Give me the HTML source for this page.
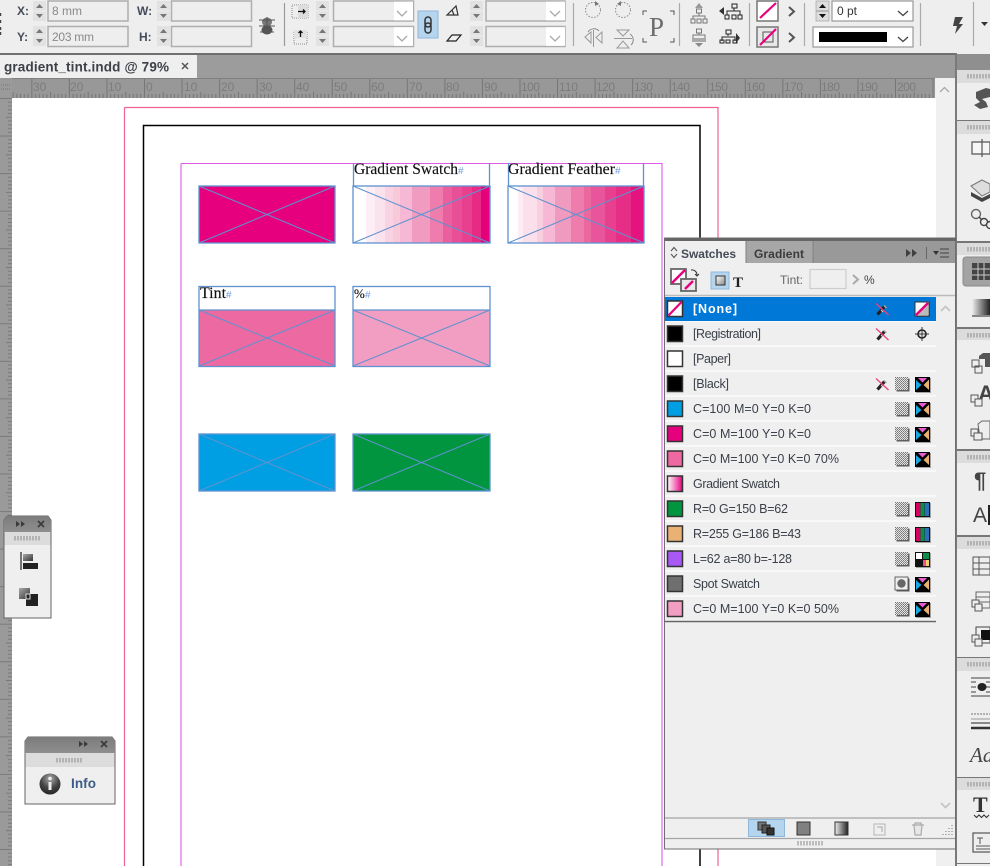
<!DOCTYPE html>
<html><head><meta charset="utf-8"><title>gradient_tint.indd</title>
<style>
html,body{margin:0;padding:0;background:#eee;width:990px;height:866px;overflow:hidden}
svg{display:block;position:absolute;left:0;top:0;filter:blur(.35px)}
text{font-family:"Liberation Sans",sans-serif}
.s{font-family:"Liberation Serif",serif;font-size:16px;fill:#111;stroke:#111;stroke-width:.15}
.h{font-family:"Liberation Sans",sans-serif;font-size:10px;fill:#6f9bd8}
.r{font-size:12px;fill:#7c7c7c}
.sw{font-size:12.5px;fill:#3a3f48}
.fr{fill:none;stroke:#5f92cf;stroke-width:1.3}
.x{stroke:#5f92cf;stroke-width:1;fill:none}
.lb{font-size:12px;font-weight:bold;fill:#444c5c}
.f{fill:#eee;stroke:#aeaeae;stroke-width:1.5}
.g{fill:none;stroke:#8d8d8d;stroke-width:1;stroke-dasharray:1 1}
.ch{fill:none;stroke:#a9a9a9;stroke-width:1.3}
</style></head><body>
<svg width="990" height="866" viewBox="0 0 990 866" xmlns="http://www.w3.org/2000/svg">
<defs>
<pattern id="rh" x="-6.2" y="78" width="37.55" height="20" patternUnits="userSpaceOnUse">
<rect width="37.55" height="20" fill="#989898"/>
<path d="M.5 0V20M4.25 16V20M8 16V20M11.8 16V20M15.5 16V20M19.3 14V20M23 16V20M26.8 16V20M30.5 16V20M34.3 16V20" stroke="#767676" stroke-width="1" fill="none"/>
</pattern>
<pattern id="rv" x="0" y="98" width="12" height="37.55" patternUnits="userSpaceOnUse">
<rect width="12" height="37.55" fill="#9a9a9a"/>
<path d="M0 .5H12M8 4.25H12M8 8H12M8 11.8H12M8 15.5H12M6 19.3H12M8 23H12M8 26.8H12M8 30.5H12M8 34.3H12" stroke="#7a7a7a" stroke-width="1" fill="none"/>
</pattern>
<pattern id="dith" width="2" height="2" patternUnits="userSpaceOnUse"><rect width="2" height="2" fill="#e4e4e4"/><rect width="1" height="1" fill="#777"/><rect x="1" y="1" width="1" height="1" fill="#888"/></pattern>
<linearGradient id="hd" x1="0" y1="0" x2="0" y2="1"><stop offset="0" stop-color="#7c7c7c"/><stop offset="1" stop-color="#8e8e8e"/></linearGradient>
<linearGradient id="gs" x1="0" y1="0" x2="1" y2="0"><stop offset="0" stop-color="#fff"/><stop offset="1" stop-color="#e6007e"/></linearGradient>
<linearGradient id="gk" x1="0" y1="0" x2="1" y2="0"><stop offset="0" stop-color="#eee"/><stop offset="1" stop-color="#222"/></linearGradient>
<linearGradient id="gv" x1="0" y1="0" x2="1" y2="1"><stop offset="0" stop-color="#aaa"/><stop offset="1" stop-color="#333"/></linearGradient>
<linearGradient id="gb" x1="0" y1="0" x2="1" y2="1"><stop offset="0" stop-color="#fff"/><stop offset="1" stop-color="#888"/></linearGradient>
<radialGradient id="sph" cx=".5" cy=".25" r=".8"><stop offset="0" stop-color="#aaa"/><stop offset=".55" stop-color="#444"/><stop offset="1" stop-color="#222"/></radialGradient>
<g id="spin"><rect width="13" height="9.5" fill="#e2e2e2"/><rect y="10.5" width="13" height="9.5" fill="#e2e2e2"/><path d="M3 7l3.5-4 3.5 4zM3 13l3.5 4 3.5-4z" fill="#777"/></g>
<g id="spb"><rect width="13" height="9.5" fill="#ddd" stroke="#999" stroke-width=".6"/><rect y="10.5" width="13" height="9.5" fill="#ddd" stroke="#999" stroke-width=".6"/><path d="M3 7l3.5-4 3.5 4zM3 13l3.5 4 3.5-4z" fill="#111"/></g>
<g id="proc"><rect x="1.500" y="1.500" width="13" height="13" fill="#222" opacity=".7"/><rect width="13" height="13" fill="url(#dith)"/></g>
<g id="spot"><rect x="1.500" y="1.500" width="13" height="13" fill="#222" opacity=".7"/><rect width="13" height="13" fill="#eee" stroke="#444" stroke-width=".8"/><circle cx="6.500" cy="6.500" r="4.200" fill="#666"/></g>
<g id="cmyk"><rect x="1" y="1" width="15" height="15" fill="#333" opacity=".4"/><rect width="15" height="15" fill="#000"/><path d="M3 1H12L7.500 5.500z" fill="#e75cd0"/><path d="M1 3V13L6.500 8z" fill="#19a7df"/><path d="M14 2.500V13L8.500 8z" fill="#eab070"/></g>
<g id="rgb"><rect x="1" y="1" width="15" height="15" fill="#333" opacity=".4"/><rect width="15" height="15" fill="#111"/><rect x="1" y="1" width="4.300" height="13" fill="#d5005f"/><rect x="5.500" y="1" width="4" height="13" fill="#0d8c4a"/><rect x="9.800" y="1" width="4.200" height="13" fill="#2a6fb8"/></g>
<g id="lab"><rect x="1" y="1" width="15" height="15" fill="#333" opacity=".4"/><rect width="15" height="15" fill="#111"/><rect x="1" y="1" width="6" height="6" fill="#fff"/><rect x="8" y="1" width="6" height="6" fill="#0d8c4a"/><rect x="8" y="8" width="3" height="6" fill="#ef4f8e"/><rect x="11" y="8" width="3" height="6" fill="#f3d16b"/></g>
<g id="pen"><path d="M2.500 12.500L9.500 4.500" stroke="#222" stroke-width="3.200" fill="none"/><path d="M9 3.500l2.500 2.500" stroke="#aaa" stroke-width="1.500"/><path d="M6 8l2 2" stroke="#ddd" stroke-width="1"/><path d="M1 1.500L13.500 13" stroke="#ef3f7c" stroke-width="1.300"/></g>
<g id="none"><rect x="1" y="1" width="14" height="14" fill="#333" opacity=".5"/><rect width="14" height="14" fill="#fff" stroke="#333" stroke-width="1"/><path d="M1 13L13 1L13 13z" fill="#bbb"/><path d="M1 13L13 1" stroke="#e6007e" stroke-width="2.400"/></g>
<g id="grip"><path d="M0 0V4.500M3 0V4.500M6 0V4.500M9 0V4.500M12 0V4.500M15 0V4.500M18 0V4.500M21 0V4.500M24 0V4.500" stroke="#8a8a8a" stroke-width="1"/></g>
</defs>

<!-- app background -->
<rect width="990" height="866" fill="#eee"/>

<!-- document tab strip -->
<rect x="0" y="53" width="957" height="25" fill="#9c9c9c"/>
<rect x="0" y="53" width="957" height="2" fill="#6f6f6f"/>
<rect x="0" y="55" width="197" height="24" fill="#efefef"/>
<text x="4" y="71.500" font-size="13.500" font-weight="bold" fill="#3d4047" textLength="165">gradient_tint.indd @ 79%</text>
<path d="M182 63l6 6M188 63l-6 6" stroke="#555" stroke-width="1.500"/>

<!-- rulers -->
<rect x="0" y="78" width="935" height="20" fill="url(#rh)"/>
<rect x="0" y="78" width="935" height="1" fill="#808080"/>
<rect x="0" y="78" width="12" height="20" fill="#9a9a9a"/>
<path d="M1 85H11M1 89H11" stroke="#777" stroke-dasharray="1 1"/>
<text class="r" x="33" y="91">30</text><text class="r" x="70" y="91">20</text><text class="r" x="108" y="91">10</text><text class="r" x="146" y="91">0</text>
<text class="r" x="184" y="91">10</text><text class="r" x="221" y="91">20</text><text class="r" x="259" y="91">30</text><text class="r" x="296" y="91">40</text>
<text class="r" x="334" y="91">50</text><text class="r" x="371" y="91">60</text><text class="r" x="409" y="91">70</text><text class="r" x="446" y="91">80</text>
<text class="r" x="484" y="91">90</text><text class="r" x="521" y="91" textLength="19">100</text><text class="r" x="559" y="91" textLength="19">110</text><text class="r" x="596" y="91" textLength="19">120</text>
<text class="r" x="634" y="91" textLength="19">130</text><text class="r" x="671" y="91" textLength="19">140</text><text class="r" x="709" y="91" textLength="19">150</text><text class="r" x="746" y="91" textLength="19">160</text>
<text class="r" x="784" y="91" textLength="19">170</text><text class="r" x="821" y="91" textLength="19">180</text><text class="r" x="859" y="91" textLength="19">190</text><text class="r" x="897" y="91" textLength="19">200</text>
<rect x="0" y="98" width="12" height="768" fill="url(#rv)"/>

<!-- pasteboard + page -->
<rect x="12" y="98" width="924" height="768" fill="#fff"/>
<rect x="936" y="79" width="20" height="787" fill="#f0f0f0"/>
<path d="M940 92l4.500-4.500 4.500 4.500" class="ch" fill="none"/>
<path d="M124.500 107.500H718V866M124.500 107.500V866" fill="none" stroke="#f0638f" stroke-width="1.200"/>
<path d="M143.500 866V125.500H700V866" fill="none" stroke="#000" stroke-width="1.500"/>
<path d="M181 163.500H662V866M181 163.500V866" fill="none" stroke="#e05ae8" stroke-width="1.100"/>

<!-- frames row 1 -->
<rect x="199" y="186" width="136" height="57" fill="#e6007e"/>
<rect x="353" y="186" width="137" height="57" fill="#fff"/>
<rect x="366" y="186" width="9" height="57" fill="#fdeef5"/>
<rect x="375" y="186" width="10" height="57" fill="#fbe3ee"/>
<rect x="385" y="186" width="8" height="57" fill="#f9d3e4"/>
<rect x="393" y="186" width="7" height="57" fill="#f8c9d8"/>
<rect x="400" y="186" width="12" height="57" fill="#f6b8d4"/>
<rect x="412" y="186" width="18" height="57" fill="#f09cc0"/>
<rect x="430" y="186" width="13" height="57" fill="#ee7dae"/>
<rect x="443" y="186" width="9" height="57" fill="#ea5f9e"/>
<rect x="452" y="186" width="10" height="57" fill="#e94f96"/>
<rect x="462" y="186" width="10" height="57" fill="#e83f8e"/>
<rect x="472" y="186" width="9" height="57" fill="#e72b85"/>
<rect x="481" y="186" width="9" height="57" fill="#e5007e"/>
<rect x="508" y="186" width="136" height="57" fill="#fff"/>
<rect x="518" y="186" width="5" height="57" fill="#fdeef5"/>
<rect x="523" y="186" width="14" height="57" fill="#fbdfeb"/>
<rect x="537" y="186" width="6" height="57" fill="#f9cfdf"/>
<rect x="543" y="186" width="12" height="57" fill="#f6b8d4"/>
<rect x="555" y="186" width="16" height="57" fill="#f19ac0"/>
<rect x="571" y="186" width="13" height="57" fill="#ee7dae"/>
<rect x="584" y="186" width="7" height="57" fill="#eb689f"/>
<rect x="591" y="186" width="14" height="57" fill="#e9559a"/>
<rect x="605" y="186" width="11" height="57" fill="#e8408e"/>
<rect x="616" y="186" width="15" height="57" fill="#e72e87"/>
<rect x="631" y="186" width="13" height="57" fill="#e5137f"/>
<rect class="fr" x="199" y="186" width="136" height="57"/><path class="x" d="M199 186L335 243M335 186L199 243"/>
<rect class="fr" x="353" y="186" width="137" height="57"/><path class="x" d="M353 186L490 243M490 186L353 243"/>
<rect class="fr" x="508" y="186" width="136" height="57"/><path class="x" d="M508 186L644 243M644 186L508 243"/>
<path class="fr" d="M353.500 163V186M489.500 163V186M508.500 163V186M643.500 163V186"/>
<text class="s" x="354" y="174" textLength="104" lengthAdjust="spacingAndGlyphs">Gradient Swatch</text><text class="h" x="458" y="174">#</text>
<text class="s" x="508" y="174" textLength="107" lengthAdjust="spacingAndGlyphs">Gradient Feather</text><text class="h" x="615" y="174">#</text>

<!-- frames row 2 -->
<rect x="199" y="310" width="136" height="56" fill="#ed69a2"/>
<rect x="353" y="310" width="137" height="56" fill="#f29dc2"/>
<rect class="fr" x="199" y="286.500" width="136" height="80"/><path class="fr" d="M199 310H335"/><path class="x" d="M199 310L335 366M335 310L199 366"/>
<rect class="fr" x="353" y="286.500" width="137" height="80"/><path class="fr" d="M353 310H490"/><path class="x" d="M353 310L490 366M490 310L353 366"/>
<text class="s" x="200" y="298" textLength="26" lengthAdjust="spacingAndGlyphs">Tint</text><text class="h" x="226" y="298">#</text>
<text class="s" x="354" y="298" style="font-size:13px" textLength="11">%</text><text class="h" x="365" y="298">#</text>

<!-- frames row 3 -->
<rect x="199" y="434" width="136" height="57" fill="#009fe3"/>
<rect x="353" y="434" width="137" height="57" fill="#00953e"/>
<rect class="fr" x="199" y="434" width="136" height="57"/><path class="x" d="M199 434L335 491M335 434L199 491"/>
<rect class="fr" x="353" y="434" width="137" height="57"/><path class="x" d="M353 434L490 491M490 434L353 491"/>

<!-- floating align palette -->
<path d="M4 618V520l3-4H48l3 4V618z" fill="#efefef" stroke="#666" stroke-width="1"/>
<path d="M4 532V520l3-4H48l3 4V532z" fill="url(#hd)"/>
<rect x="4.500" y="532" width="46" height="13" fill="#dcdcdc"/>
<use href="#grip" transform="translate(15 536)"/>
<path d="M16 521l4 3-4 3zM21 521l4 3-4 3z" fill="#3a3a3a"/>
<path d="M38 521l6 6M44 521l-6 6" stroke="#3a3a3a" stroke-width="1.600"/>
<path d="M21 552V570" stroke="#222" stroke-width="1.200"/>
<rect x="23" y="554" width="10" height="7" fill="url(#gv)"/>
<rect x="23" y="563" width="15" height="6" fill="#222"/>
<rect x="19" y="588" width="11" height="11" fill="url(#gv)"/>
<rect x="26" y="594" width="12" height="12" fill="#222"/>
<rect x="26" y="594" width="4" height="5" fill="none" stroke="#ddd"/>

<!-- floating info palette -->
<path d="M25 804V741l3-4H112l3 4V804z" fill="#efefef" stroke="#666" stroke-width="1"/>
<path d="M25 753V741l3-4H112l3 4V753z" fill="url(#hd)"/>
<rect x="25.500" y="753" width="89" height="14" fill="#dcdcdc"/>
<use href="#grip" transform="translate(57 758)"/>
<path d="M79 741l4 3-4 3zM84 741l4 3-4 3z" fill="#3a3a3a"/>
<path d="M101 741l6 6M107 741l-6 6" stroke="#3a3a3a" stroke-width="1.600"/>
<circle cx="50" cy="784" r="10.500" fill="url(#sph)"/>
<rect x="48.500" y="782" width="3" height="8" fill="#eee"/><circle cx="50" cy="778.500" r="1.800" fill="#eee"/>
<text x="71" y="788" font-size="13.500" font-weight="bold" fill="#3c5b86" textLength="25">Info</text>

<!-- toolbar -->
<rect x="0" y="0" width="990" height="53" fill="#eeeeee"/>
<path d="M.5 13v3M.5 20v3M.5 27v3M.5 32v3" stroke="#444" stroke-width="1.500"/>
<text class="lb" x="17" y="15">X:</text><text class="lb" x="17" y="41">Y:</text>
<text class="lb" x="137" y="15">W:</text><text class="lb" x="139" y="41">H:</text>
<use href="#spin" transform="translate(33 1)"/><use href="#spin" transform="translate(33 26)"/>
<use href="#spin" transform="translate(157 1)"/><use href="#spin" transform="translate(157 26)"/>
<rect class="f" x="48" y="1" width="80" height="20"/><rect class="f" x="48" y="26.500" width="80" height="20"/>
<text x="52" y="15" font-size="12" fill="#8a8a8a" textLength="30">8 mm</text>
<text x="52" y="41" font-size="12" fill="#8a8a8a" textLength="42">203 mm</text>
<rect class="f" x="171.500" y="1" width="80" height="20"/><rect class="f" x="171.500" y="26.500" width="80" height="20"/>
<ellipse cx="267" cy="22" rx="5" ry="4.500" fill="#777"/><ellipse cx="267" cy="30" rx="5.500" ry="4.500" fill="#555"/>
<path d="M259 20h16M259 26h16M260 32h14M267 17v17" stroke="#555" stroke-width="1" fill="none"/>
<path d="M284.500 3V46" stroke="#999" stroke-width="1.200"/>
<rect x="292" y="5" width="16" height="13" class="g"/><rect x="298" y="5" width="10" height="13" fill="#ddd"/><path d="M298 11.500h7m-2-2l2 2-2 2" stroke="#111" fill="none" stroke-width="1.300"/>
<rect x="294" y="31" width="13" height="13" class="g"/><rect x="294" y="30" width="13" height="8" fill="#e2e2e2"/><path d="M300.500 37v-6m-2 2l2-2 2 2" stroke="#111" fill="none" stroke-width="1.300"/>
<use href="#spin" transform="translate(316 1)"/><use href="#spin" transform="translate(316 26)"/>
<rect class="f" x="333.500" y="1" width="80" height="20"/><rect x="394" y="1.700" width="19" height="18.600" fill="#fff"/>
<rect class="f" x="333.500" y="26.500" width="80" height="20"/><rect x="394" y="27.200" width="19" height="18.600" fill="#fff"/>
<path class="ch" d="M397 11l5 5 5-5M397 36l5 5 5-5"/>
<rect x="418" y="11" width="20" height="27" fill="#b5d5ee" stroke="#8fb7da"/>
<rect x="425" y="17" width="6" height="10" rx="3" fill="none" stroke="#333" stroke-width="1.500"/><rect x="425" y="23" width="6" height="10" rx="3" fill="none" stroke="#333" stroke-width="1.500"/>
<path d="M447 15L456 6L458 15zM452 10l2 5" fill="none" stroke="#333" stroke-width="1.200"/>
<path d="M447 41L452 35H461L456 41z" fill="#eee" stroke="#222" stroke-width="1.200"/>
<use href="#spin" transform="translate(470 1)"/><use href="#spin" transform="translate(470 26)"/>
<rect class="f" x="486" y="1" width="79" height="20"/><rect x="546" y="1.700" width="19" height="18.600" fill="#fff"/>
<rect class="f" x="486" y="26.500" width="79" height="20"/><rect x="546" y="27.200" width="19" height="18.600" fill="#fff"/>
<path class="ch" d="M550 11l5 5 5-5M550 36l5 5 5-5"/>
<path d="M573.500 3V46" stroke="#aaa" stroke-width="1.200"/>
<circle cx="593" cy="10" r="7.500" fill="none" stroke="#8a8a8a" stroke-dasharray="1.500 1.500"/><path d="M595 1l4 3-4 2z" fill="#777"/>
<circle cx="623" cy="10" r="7.500" fill="none" stroke="#8a8a8a" stroke-dasharray="1.500 1.500"/><path d="M621 1l-4 3 4 2z" fill="#777"/>
<path d="M585 37l6-5v11zM602 32v11l-6-5.500zM593.500 30v17" fill="none" stroke="#999"/><path d="M588 32a7 7 0 0 1 11-1" fill="none" stroke="#888"/>
<path d="M617 30h12l-6 6zM617 48h12l-6-7zM614 38.500h18" fill="none" stroke="#999"/><path d="M630 34a7 7 0 0 1 1 11" fill="none" stroke="#888"/>
<path d="M643 15v-4h4M643 38v4h4M674 15v-4h-4M674 38v4h-4" fill="none" stroke="#555" stroke-width="1"/>
<text x="649" y="36" font-size="27" fill="#6d6d6d" style="font-family:'Liberation Serif',serif">P</text>
<path d="M679.500 3V46" stroke="#aaa" stroke-width="1.200"/>
<path d="M695 8l4-5 4 5z" fill="#999"/><rect x="696.500" y="9" width="5" height="4" fill="none" stroke="#777"/><path d="M699 13v3M693 19v-3h12v3" fill="none" stroke="#777"/><rect x="691" y="19" width="4" height="4" fill="none" stroke="#777"/><rect x="697" y="19" width="4" height="4" fill="none" stroke="#777"/><rect x="703" y="19" width="4" height="4" fill="none" stroke="#777"/>
<rect x="696.500" y="29" width="5" height="4" fill="none" stroke="#777"/><path d="M699 33v2M693 38v-3h12v3" fill="none" stroke="#777"/><rect x="692" y="38" width="14" height="4" fill="#aaa"/><path d="M695 43l4 4 4-4z" fill="#888"/>
<path d="M719 11l5-4v8z" fill="#333"/><rect x="732" y="4" width="5" height="4" fill="none" stroke="#222"/><path d="M734 8v3M727 15v-4h13v4" fill="none" stroke="#222"/><rect x="725" y="15" width="4" height="4" fill="none" stroke="#222"/><rect x="732" y="15" width="4" height="4" fill="none" stroke="#222"/><rect x="738" y="15" width="4" height="4" fill="none" stroke="#222"/>
<rect x="726" y="30" width="5" height="4" fill="none" stroke="#222"/><path d="M728 34v2" fill="none" stroke="#222"/><path d="M722 41v-4h13v4" fill="none" stroke="#222"/><rect x="720" y="40" width="4" height="3" fill="none" stroke="#222"/><rect x="726" y="40" width="4" height="3" fill="none" stroke="#222"/><rect x="733" y="40" width="4" height="3" fill="none" stroke="#222"/><path d="M736 33l4 5-4 5z" fill="#333"/>
<path d="M749.500 3V46" stroke="#aaa" stroke-width="1.200"/>
<rect x="757" y="1" width="21" height="20" fill="#fff" stroke="#777" stroke-width="1.500"/><path d="M760 18L776 3" stroke="#e6007e" stroke-width="2.200"/>
<rect x="757" y="27" width="21" height="20" fill="#e8e8e8" stroke="#777" stroke-width="1.500"/><rect x="763" y="32" width="10" height="10" fill="none" stroke="#555"/><path d="M760 45L776 29" stroke="#e6007e" stroke-width="2.200"/>
<path d="M789 7l5 4.500-5 4.500M789 33l5 4.500-5 4.500" fill="none" stroke="#555" stroke-width="2"/>
<path d="M804.500 3V46" stroke="#aaa" stroke-width="1.200"/>
<use href="#spb" transform="translate(816 1)"/>
<rect x="832" y="1" width="81" height="20" fill="#fff" stroke="#999" stroke-width="1.200"/>
<text x="837" y="15" font-size="12" fill="#333">0 pt</text>
<path d="M898 11l5 4.500 5-4.500" fill="none" stroke="#444" stroke-width="1.300"/>
<rect x="813" y="27" width="100" height="20" fill="#fff" stroke="#999" stroke-width="1.200"/>
<rect x="819" y="32" width="68" height="10" fill="#000"/>
<path d="M898 37l5 4.500 5-4.500" fill="none" stroke="#444" stroke-width="1.300"/>
<path d="M920.500 3V46" stroke="#aaa" stroke-width="1.200"/>
<path d="M955 17h8l-4 7h4l-8 10 2-8h-4z" fill="#444"/>
<path d="M973.500 2V46" stroke="#aaa" stroke-width="1.200"/>
<path d="M981 22h7l-3.500 4z" fill="#333"/>

<!-- dock -->
<rect x="956" y="53" width="34" height="813" fill="#eeeeee"/>
<rect x="955" y="53" width="2" height="813" fill="#7a7a7a"/>
<rect x="957" y="54" width="33" height="16" fill="#8f8f8f"/>
<g fill="#dcdcdc">
<rect x="957" y="70" width="33" height="13"/><rect x="957" y="121" width="33" height="13"/><rect x="957" y="243" width="33" height="12"/>
<rect x="957" y="329" width="33" height="11"/><rect x="957" y="451" width="33" height="12"/><rect x="957" y="537" width="33" height="12"/>
<rect x="957" y="658" width="33" height="13"/><rect x="957" y="778" width="33" height="12"/>
</g>
<g fill="#777"><rect x="957" y="120" width="33" height="1"/><rect x="957" y="241" width="33" height="2"/><rect x="957" y="327" width="33" height="2"/><rect x="957" y="449" width="33" height="2"/><rect x="957" y="535" width="33" height="2"/><rect x="957" y="657" width="33" height="1"/><rect x="957" y="777" width="33" height="1"/><rect x="957" y="863" width="33" height="1"/></g>
<use href="#grip" transform="translate(968 74)"/><use href="#grip" transform="translate(968 125)"/><use href="#grip" transform="translate(968 247)"/><use href="#grip" transform="translate(968 333)"/><use href="#grip" transform="translate(968 455)"/><use href="#grip" transform="translate(968 541)"/><use href="#grip" transform="translate(968 662)"/><use href="#grip" transform="translate(968 782)"/>
<path d="M976 92l10-4 4 1v8l-8 2 4 3 2 5-8 2-6-4 6-3-4-4z" fill="#555"/>
<path d="M972 142h18v12h-18v-8zM982 139v18" fill="#f6f6f6" stroke="#555" stroke-width="1.200"/>
<path d="M971 186l11-6 8 4v8l-8 4z" fill="#ddd" stroke="#777"/><path d="M971 192l11 6 8-4v4l-8 4-11-6z" fill="#444"/>
<circle cx="976" cy="214" r="4.500" fill="#eee" stroke="#666" stroke-width="1.400"/><circle cx="984" cy="222" r="3.500" fill="#eee" stroke="#444" stroke-width="1.400"/><path d="M979 217l3 3" stroke="#444" stroke-width="1.500"/><circle cx="990" cy="225" r="3.500" fill="#eee" stroke="#444" stroke-width="1.400"/>
<rect x="963" y="257" width="30" height="29" rx="3" fill="#a3a3a3" stroke="#8a8a8a"/>
<rect x="972" y="263" width="18" height="17" fill="#444"/><path d="M978 263v17M984 263v17M972 269h18M972 275h18" stroke="#ccc" stroke-width="1"/>
<rect x="972" y="299" width="18" height="16" fill="url(#gk)"/><rect x="972" y="315" width="18" height="2" fill="#888"/>
<path d="M979 356l4-3h7v14h-5v-8h-6z" fill="#555"/><rect x="972" y="360" width="7" height="7" fill="#eee" stroke="#555"/><rect x="975" y="366" width="7" height="7" fill="none" stroke="#555"/>
<text x="978" y="401" font-size="22" font-weight="bold" fill="#444">A</text><rect x="971" y="395" width="7" height="7" fill="#eee" stroke="#555"/><rect x="975" y="399" width="7" height="7" fill="#eee" stroke="#555"/>
<path d="M978 424l4-3h8v18h-10z" fill="#eee" stroke="#666"/><rect x="971" y="429" width="7" height="7" fill="#eee" stroke="#555"/><rect x="974" y="433" width="8" height="7" fill="#eee" stroke="#555"/>
<text x="974" y="488" font-size="22" font-weight="bold" fill="#444">¶</text>
<text x="973" y="522" font-size="21" fill="#444">A</text><rect x="988" y="505" width="2" height="20" fill="#222"/>
<rect x="973" y="557" width="17" height="18" fill="#eee" stroke="#555"/><path d="M973 563h17M973 569h17M979 557v18" stroke="#555"/>
<rect x="976" y="592" width="14" height="16" fill="#eee" stroke="#666"/><path d="M976 597h14M976 602h14" stroke="#666"/><rect x="972" y="600" width="7" height="7" fill="#eee" stroke="#555"/><rect x="975" y="604" width="7" height="7" fill="#eee" stroke="#555"/>
<rect x="976" y="627" width="14" height="16" fill="#eee" stroke="#444"/><rect x="981" y="630" width="9" height="10" fill="#111"/><rect x="972" y="635" width="7" height="7" fill="#eee" stroke="#555"/><rect x="975" y="639" width="7" height="7" fill="#eee" stroke="#555"/>
<path d="M971 678h19M971 682h5M971 687h5M971 692h5M971 696h19M986 682h4M986 687h4M986 692h4" stroke="#666" stroke-width="1.300"/><ellipse cx="982" cy="687" rx="4.500" ry="4" fill="#222"/>
<path d="M971 714h19" stroke="#777" stroke-dasharray="2 1"/><path d="M971 719h19" stroke="#999"/><path d="M971 723h19" stroke="#666" stroke-width="1.500"/><path d="M971 728h19" stroke="#333" stroke-width="2.500"/>
<text x="970" y="762" font-size="21" font-style="italic" fill="#444" style="font-family:'Liberation Serif',serif">Aa</text>
<text x="973" y="812" font-size="22" font-weight="bold" fill="#333" style="font-family:'Liberation Serif',serif">T</text>
<path d="M974 815l2.500 2.500 2.500-2.500 2.500 2.500 2.500-2.500 2.500 2.500 2.500-2.500" fill="none" stroke="#333" stroke-width="1.100"/>
<rect x="973" y="833" width="18" height="19" fill="#eee" stroke="#555" stroke-width="1.200"/>
<path d="M977 838h6M980 838v6M976 846h14M976 849h14" stroke="#555" stroke-width="1"/>

<!-- swatches panel -->
<rect x="664.500" y="238" width="291" height="611" fill="#efefef" stroke="#6f6f6f" stroke-width="1"/>
<rect x="665" y="238" width="291" height="3" fill="#666"/>
<rect x="665" y="241" width="290" height="22" fill="#999"/>
<rect x="665" y="241" width="81" height="23" fill="#efefef"/>
<rect x="746" y="241" width="67" height="22" fill="#a7a7a7"/>
<path d="M746 241V263M813 241V263" stroke="#818181"/>
<path d="M671 251l3-3.500 3 3.500M671 254l3 3.500 3-3.500" fill="none" stroke="#555" stroke-width="1.100"/>
<text x="681" y="258" font-size="12" font-weight="bold" fill="#454c58" textLength="55">Swatches</text>
<text x="754" y="258" font-size="12" font-weight="bold" fill="#3b3b3b" textLength="50">Gradient</text>
<path d="M906 249l5 4-5 4zM912 249l5 4-5 4z" fill="#404040"/>
<path d="M926.500 247v12" stroke="#666"/>
<path d="M933 251h6l-3 4z" fill="#333"/><path d="M940 249h9M940 253h9M940 257h9" stroke="#444"/>
<path d="M665 295.500H955" stroke="#bbb" stroke-width="1.500"/>

<!-- fill/stroke tool row -->
<rect x="671" y="269" width="15" height="15" fill="#fff" stroke="#666" stroke-width="1.800"/><path d="M672 283L685 270" stroke="#e6007e" stroke-width="2.500"/>
<rect x="681" y="279" width="15" height="12" fill="#e8e8e8" stroke="#666" stroke-width="1.800"/><path d="M685 289l8-8" stroke="#e6007e" stroke-width="2.500"/>
<path d="M691 270a5 5 0 0 1 6 5m-2-1l2 2 2-2" fill="none" stroke="#333"/>
<rect x="711" y="272" width="18" height="17" fill="#b5d5ee" stroke="#8fb7da"/>
<rect x="716" y="276" width="9" height="9" fill="url(#gb)" stroke="#333"/>
<text x="733" y="287" font-size="15" font-weight="bold" fill="#222" style="font-family:'Liberation Serif',serif">T</text>
<text x="780" y="284" font-size="12" fill="#666" textLength="23">Tint:</text>
<rect x="810" y="269.500" width="36" height="19" fill="#efefef" stroke="#ccc" stroke-width="1.200"/>
<path d="M853 275l5 4.500-5 4.500" fill="none" stroke="#aaa" stroke-width="2"/>
<text x="864" y="284" font-size="12" fill="#444">%</text>

<!-- list rows -->
<rect x="665" y="297" width="271" height="324" fill="#f8f8f8"/>
<g fill="#efefef">
<rect x="665" y="322" width="271" height="23"/><rect x="665" y="347" width="271" height="23"/><rect x="665" y="372" width="271" height="23"/><rect x="665" y="397" width="271" height="23"/><rect x="665" y="422" width="271" height="23"/><rect x="665" y="447" width="271" height="23"/><rect x="665" y="472" width="271" height="23"/><rect x="665" y="497" width="271" height="23"/><rect x="665" y="522" width="271" height="23"/><rect x="665" y="547" width="271" height="23"/><rect x="665" y="572" width="271" height="23"/><rect x="665" y="597" width="271" height="23"/>
</g>
<rect x="665" y="297" width="271" height="24" fill="#0078d7"/>
<rect x="936" y="297" width="19" height="521" fill="#efefef"/>
<path d="M665 621.500H936" stroke="#666" stroke-width="1.500"/>

<g stroke="#333" stroke-width="1.500">
<rect x="667.500" y="301" width="15" height="15.500" fill="#fff"/>
<rect x="667.500" y="326" width="15" height="15.500" fill="#000"/>
<rect x="667.500" y="351" width="15" height="15.500" fill="#fff"/>
<rect x="667.500" y="376" width="15" height="15.500" fill="#000"/>
<rect x="667.500" y="401" width="15" height="15.500" fill="#009fe3"/>
<rect x="667.500" y="426" width="15" height="15.500" fill="#e6007e"/>
<rect x="667.500" y="451" width="15" height="15.500" fill="#ee69a2"/>
<rect x="667.500" y="476" width="15" height="15.500" fill="url(#gs)"/>
<rect x="667.500" y="501" width="15" height="15.500" fill="#00953e"/>
<rect x="667.500" y="526" width="15" height="15.500" fill="#e9b174"/>
<rect x="667.500" y="551" width="15" height="15.500" fill="#a858f5"/>
<rect x="667.500" y="576" width="15" height="15.500" fill="#6f6f6f"/>
<rect x="667.500" y="601" width="15" height="15.500" fill="#f29dc2"/>
</g>
<path d="M668.500 315.500L681.500 302" stroke="#e6007e" stroke-width="2.200"/>

<text x="693" y="313" font-size="12.500" font-weight="bold" fill="#fff" textLength="44">[None]</text>
<text class="sw" x="693" y="338" textLength="68">[Registration]</text>
<text class="sw" x="693" y="363" textLength="38">[Paper]</text>
<text class="sw" x="693" y="388" textLength="36">[Black]</text>
<text class="sw" x="693" y="413" textLength="118">C=100 M=0 Y=0 K=0</text>
<text class="sw" x="693" y="438" textLength="118">C=0 M=100 Y=0 K=0</text>
<text class="sw" x="693" y="463" textLength="146">C=0 M=100 Y=0 K=0 70%</text>
<text class="sw" x="693" y="488" textLength="87">Gradient Swatch</text>
<text class="sw" x="693" y="513" textLength="95">R=0 G=150 B=62</text>
<text class="sw" x="693" y="538" textLength="108">R=255 G=186 B=43</text>
<text class="sw" x="693" y="563" textLength="99">L=62 a=80 b=-128</text>
<text class="sw" x="693" y="588" textLength="67">Spot Swatch</text>
<text class="sw" x="693" y="613" textLength="146">C=0 M=100 Y=0 K=0 50%</text>

<use href="#pen" transform="translate(875 302)"/><use href="#none" transform="translate(915 302)"/>
<use href="#pen" transform="translate(875 327)"/>
<circle cx="922" cy="334" r="4" fill="none" stroke="#222" stroke-width="1.600"/><path d="M915 334h14M922 327v14" stroke="#333"/>
<use href="#pen" transform="translate(875 377)"/>
<use href="#proc" transform="translate(895 377)"/><use href="#cmyk" transform="translate(915 377)"/>
<use href="#proc" transform="translate(895 402)"/><use href="#cmyk" transform="translate(915 402)"/>
<use href="#proc" transform="translate(895 427)"/><use href="#cmyk" transform="translate(915 427)"/>
<use href="#proc" transform="translate(895 452)"/><use href="#cmyk" transform="translate(915 452)"/>
<use href="#proc" transform="translate(895 502)"/><use href="#rgb" transform="translate(915 502)"/>
<use href="#proc" transform="translate(895 527)"/><use href="#rgb" transform="translate(915 527)"/>
<use href="#proc" transform="translate(895 552)"/><use href="#lab" transform="translate(915 552)"/>
<use href="#spot" transform="translate(895 577)"/><use href="#cmyk" transform="translate(915 577)"/>
<use href="#proc" transform="translate(895 602)"/><use href="#cmyk" transform="translate(915 602)"/>

<path d="M941 311l4.500-4.500 4.500 4.500" fill="none" stroke="#c4c4c4" stroke-width="1.800"/>
<path d="M941 803l4.500 4.500 4.500-4.500" fill="none" stroke="#c4c4c4" stroke-width="1.800"/>

<!-- panel footer -->
<path d="M665 818H955M665 838.500H955" stroke="#a5a5a5" stroke-width="1.200"/>
<rect x="748.500" y="819.500" width="36" height="17" fill="#b5d5ee" stroke="#8fb7da"/>
<rect x="758" y="822" width="8" height="8" fill="#777" stroke="#333"/><rect x="762" y="825" width="8" height="8" fill="#555" stroke="#222"/><rect x="767" y="828" width="7" height="7" fill="#333" stroke="#111"/>
<rect x="797" y="822" width="13" height="13" fill="#808080" stroke="#333"/>
<rect x="835" y="822" width="13" height="13" fill="url(#gk)" stroke="#333"/>
<rect x="874" y="824" width="11" height="11" fill="none" stroke="#b5b5b5"/><path d="M877 827h5v5" fill="none" stroke="#aaa"/>
<path d="M912 825h12M914 825l1 10h6l1-10M915 825v-2h6v2" fill="#e8e8e8" stroke="#aaa" stroke-width="1.200"/>
<path d="M952 825v1M949 828v1M952 828v1M946 831v1M949 831v1M952 831v1M943 834v1M946 834v1M949 834v1M952 834v1" stroke="#777"/>
<use href="#grip" transform="translate(798 841)"/>
</svg>
</body></html>
